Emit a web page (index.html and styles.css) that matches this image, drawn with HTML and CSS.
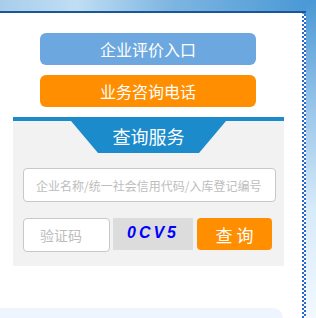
FILE: index.html
```html
<!DOCTYPE html>
<html lang="zh-CN">
<head>
    <meta charset="UTF-8">
    <meta name="viewport" content="width=device-width, initial-scale=1.0">
    <title>查询服务</title>
    <link rel="stylesheet" href="styles.css">
</head>
<body>
    <div class="sky"></div>
    <div class="row">
        <div class="main">
            <div class="btn btn-blue">企业评价入口</div>
            <div class="btn btn-orange">业务咨询电话</div>
            <div class="panel">
                <div class="panel-title">查询服务</div>
                <input class="search" type="text" placeholder="企业名称/统一社会信用代码/入库登记编号">
                <div class="query-row">
                    <input class="code" type="text" placeholder="验证码">
                    <div class="captcha">0CV5</div>
                    <button class="query">查 询</button>
                </div>
            </div>
            <div class="next-box"></div>
        </div>
        <div class="strip"></div>
    </div>
</body>
</html>
```

FILE: styles.css
```css
body {
    margin: 0;
    font-family: "Noto Sans CJK SC", "Liberation Sans", sans-serif;
    background: linear-gradient(to bottom, #4a98d5 0%, #9ac7ea 35%, #d6eaf8 65%, #f2f9ff 100%);
    height: 318px;
    overflow: hidden;
}
.sky {
    width: 306px;
    height: 11px;
    background: linear-gradient(to right, #a8cdeb 0%, #c0def3 25%, #7fb6e2 55%, #4b99d6 100%);
    border-bottom: 2px solid #1b5796;
}
.row {
    display: flex;
    align-items: flex-start;
}
.main {
    width: 302px;
    height: 305px;
    background: white;
    padding-top: 20px;
    box-sizing: border-box;
}
.strip {
    width: 4px;
    height: 305px;
    margin-top: 1px;
    background: repeating-conic-gradient(#2d67d2 0 25%, #ffffff 0 50%) 0 0 / 4px 4px;
}
.btn {
    width: 216px;
    height: 32px;
    margin: 0 0 10px 40px;
    border-radius: 6px;
    color: white;
    font-size: 16px;
    line-height: 32px;
    text-align: center;
}
.btn-blue {
    background: #6ca8df;
}
.btn-orange {
    background: #ff8e00;
}
.panel {
    width: 271px;
    margin-left: 13px;
    background: #f2f2f2;
    border-top: 4px solid #1b8bcc;
    padding-bottom: 14px;
}
.panel-title {
    width: 155px;
    height: 32px;
    margin: 0 auto;
    background: #1b8bcc;
    clip-path: polygon(0 0, 100% 0, calc(100% - 27px) 100%, 27px 100%);
    color: white;
    font-size: 18px;
    line-height: 30px;
    text-align: center;
}
.search {
    display: block;
    width: 253px;
    height: 34px;
    margin: 15px 0 0 10px;
    box-sizing: border-box;
    border: 1px solid #c8c8c8;
    border-radius: 4px;
    padding: 0 0 0 12px;
    font-family: inherit;
    font-size: 12px;
    background: white;
}
.search::placeholder, .code::placeholder {
    color: #bdbdbd;
}
.query-row {
    display: flex;
    align-items: flex-start;
    margin: 16px 0 0 10px;
}
.code {
    width: 87px;
    height: 34px;
    box-sizing: border-box;
    border: 1px solid #c8c8c8;
    border-radius: 4px;
    padding: 0 0 0 16px;
    font-family: inherit;
    font-size: 14px;
    background: white;
}
.captcha {
    width: 80px;
    height: 32px;
    margin-left: 3px;
    background: #dcdcdc;
    color: #0000ff;
    font-family: "Liberation Sans", sans-serif;
    font-weight: bold;
    font-style: italic;
    font-size: 16px;
    letter-spacing: 3px;
    line-height: 30px;
    text-align: center;
}
.query {
    width: 75px;
    height: 32px;
    margin-left: 4px;
    border: none;
    border-radius: 4px;
    background: #ff8e00;
    color: white;
    font-family: inherit;
    font-size: 17px;
    padding: 0;
}
.next-box {
    width: 283px;
    height: 20px;
    margin-top: 42px;
    background: #eef5fe;
    border-top-right-radius: 10px;
}
```
